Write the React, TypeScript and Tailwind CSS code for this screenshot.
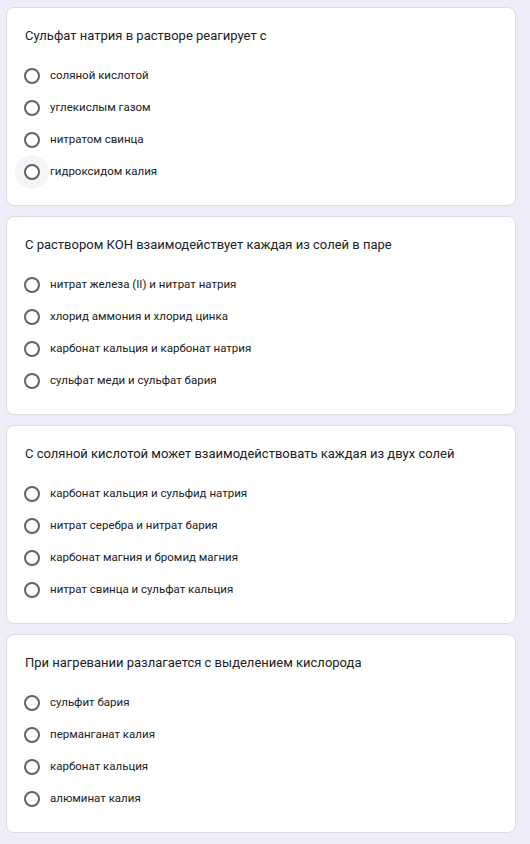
const questions = [
  {
    title: "Сульфат натрия в растворе реагирует с",
    options: ["соляной кислотой", "углекислым газом", "нитратом свинца", "гидроксидом калия"],
    hovered: 3,
  },
  {
    title: "С раствором КОН взаимодействует каждая из солей в паре",
    options: [
      "нитрат железа (II) и нитрат натрия",
      "хлорид аммония и хлорид цинка",
      "карбонат кальция и карбонат натрия",
      "сульфат меди и сульфат бария",
    ],
  },
  {
    title: "С соляной кислотой может взаимодействовать каждая из двух солей",
    options: [
      "карбонат кальция и сульфид натрия",
      "нитрат серебра и нитрат бария",
      "карбонат магния и бромид магния",
      "нитрат свинца и сульфат кальция",
    ],
  },
  {
    title: "При нагревании разлагается с выделением кислорода",
    options: ["сульфит бария", "перманганат калия", "карбонат кальция", "алюминат калия"],
  },
];

function Radio({ hovered }: { hovered?: boolean }) {
  return (
    <span className="relative flex h-[16px] w-[16px] shrink-0 items-center justify-center">
      {hovered && <span className="absolute -inset-[9px] rounded-full bg-[#f5f5f8]" />}
      <span className="relative h-[16px] w-[16px] rounded-full border-2 border-[#5f6368] bg-white" />
    </span>
  );
}

export default function App() {
  return (
    <div className="min-h-[844px] w-[530px] bg-[#f0ebf8] pt-[7px] font-['Roboto',sans-serif]">
      <div className="flex w-[510px] flex-col gap-[10px] ml-[6px]">
        {questions.map((q) => (
          <div
            key={q.title}
            className="rounded-[8px] border border-[#dadce0] bg-white pl-[17px] pr-4 pt-[19px] pb-[17px]"
          >
            <div className="ml-px text-[13px] leading-[18px] text-[#202124]">{q.title}</div>
            <div className="mt-[15px] flex flex-col">
              {q.options.map((opt, i) => (
                <div key={opt} className="flex h-[32px] items-center gap-[10px]">
                  <Radio hovered={q.hovered === i} />
                  <span className="text-[11.5px] text-[#202124]">{opt}</span>
                </div>
              ))}
            </div>
          </div>
        ))}
      </div>
    </div>
  );
}
